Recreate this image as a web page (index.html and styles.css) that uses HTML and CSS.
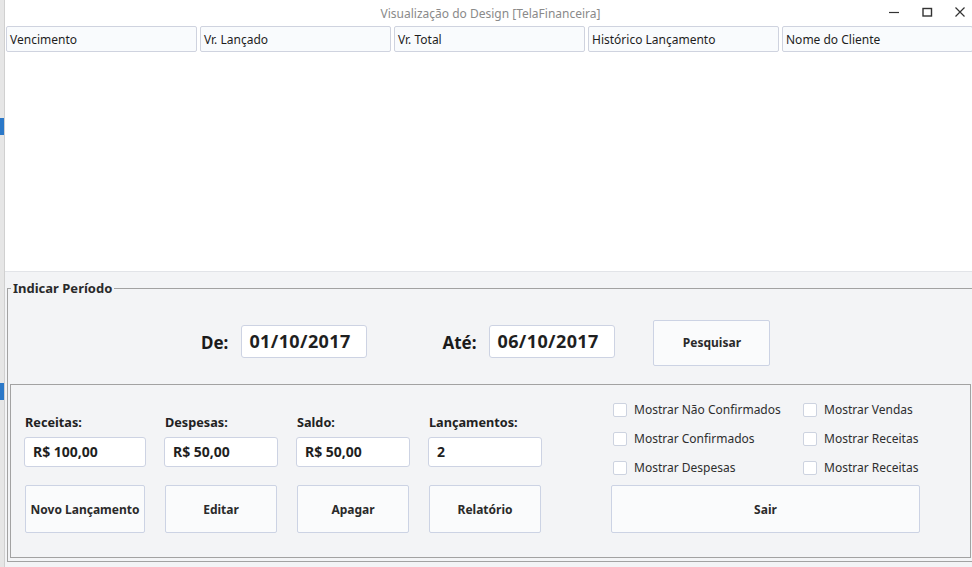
FILE: index.html
```html
<!DOCTYPE html>
<html lang="pt">
<head>
<meta charset="utf-8">
<title>TelaFinanceira</title>
<link rel="stylesheet" href="styles.css">
</head>
<body>
<div class="bg-app">
  <span class="bg-sel bg-sel-1"></span>
  <span class="bg-sel bg-sel-2"></span>
</div>
<div class="window">
  <div class="titlebar">
    <div class="title">Visualização do Design [TelaFinanceira]</div>
    <div class="controls">
      <svg class="ctl" width="12" height="12" viewBox="0 0 12 12"><path d="M1 6.5h10" stroke="#333" stroke-width="1.2" fill="none"/></svg>
      <svg class="ctl" width="12" height="12" viewBox="0 0 12 12"><rect x="2" y="2.5" width="8.5" height="7.5" stroke="#333" stroke-width="1.4" fill="none"/></svg>
      <svg class="ctl" width="12" height="12" viewBox="0 0 12 12"><path d="M1.5 1.5l9 9M10.5 1.5l-9 9" stroke="#333" stroke-width="1.2" fill="none"/></svg>
    </div>
  </div>
  <div class="table">
    <div class="thead">
      <div class="th">Vencimento</div>
      <div class="th">Vr. Lançado</div>
      <div class="th">Vr. Total</div>
      <div class="th">Histórico Lançamento</div>
      <div class="th">Nome do Cliente</div>
    </div>
    <div class="tbody"></div>
  </div>
  <div class="panel">
    <fieldset class="periodo">
      <legend>Indicar Período</legend>
      <div class="date-row">
        <span class="date-label">De:</span>
        <div class="date-input de">01/10/2017</div>
        <span class="date-label ate">Até:</span>
        <div class="date-input">06/10/2017</div>
        <button class="btn btn-pesquisar">Pesquisar</button>
      </div>
      <div class="inner">
        <div class="cols">
          <div class="col col-first">
            <div class="lbl">Receitas:</div>
            <div class="val">R$ 100,00</div>
            <button class="btn btn-col">Novo Lançamento</button>
          </div>
          <div class="col">
            <div class="lbl">Despesas:</div>
            <div class="val">R$ 50,00</div>
            <button class="btn btn-col">Editar</button>
          </div>
          <div class="col">
            <div class="lbl">Saldo:</div>
            <div class="val">R$ 50,00</div>
            <button class="btn btn-col">Apagar</button>
          </div>
          <div class="col">
            <div class="lbl">Lançamentos:</div>
            <div class="val">2</div>
            <button class="btn btn-col">Relatório</button>
          </div>
        </div>
        <div class="right">
          <div class="checks">
            <label class="chk"><span class="box"></span>Mostrar Não Confirmados</label>
            <label class="chk"><span class="box"></span>Mostrar Vendas</label>
            <label class="chk"><span class="box"></span>Mostrar Confirmados</label>
            <label class="chk"><span class="box"></span>Mostrar Receitas</label>
            <label class="chk"><span class="box"></span>Mostrar Despesas</label>
            <label class="chk"><span class="box"></span>Mostrar Receitas</label>
          </div>
          <button class="btn btn-sair">Sair</button>
        </div>
      </div>
    </fieldset>
  </div>
</div>
</body>
</html>
```
FILE: styles.css
```css
* { box-sizing: border-box; }
html, body {
  margin: 0;
  padding: 0;
  width: 972px;
  height: 567px;
  overflow: hidden;
}
body {
  display: flex;
  font-family: "Noto Sans", "Open Sans", sans-serif;
  font-size: 12px;
  color: #2a2a2a;
  background: #ececec;
}
.bg-app {
  width: 5px;
  flex: none;
  background: #e6e6e6;
  display: flex;
  flex-direction: column;
  border-right: 1px solid #d0d0d0;
}
.bg-sel { display: block; background: #2b78c8; height: 17px; }
.bg-sel-1 { margin-top: 118px; }
.bg-sel-2 { margin-top: 248px; }

.window {
  flex: 1;
  display: flex;
  flex-direction: column;
  background: #fff;
  min-width: 0;
}
.titlebar {
  height: 26px;
  flex: none;
  display: flex;
  align-items: center;
  position: relative;
}
.title {
  flex: 1;
  text-align: center;
  color: #8a8a8a;
  font-size: 12px;
  padding-left: 4px;
}
.controls {
  position: absolute;
  right: 6px;
  top: 6px;
  display: flex;
  gap: 21px;
}
.ctl { display: block; }

.table {
  height: 245px;
  flex: none;
  display: flex;
  flex-direction: column;
  padding-left: 1px;
}
.thead {
  display: flex;
  gap: 3px;
  height: 26px;
  flex: none;
}
.th {
  width: 191px;
  flex: none;
  border: 1px solid #cfd3df;
  border-radius: 2px;
  background: #f9fbfd;
  padding: 4px 0 0 3px;
  font-size: 12px;
  color: #1e1e1e;
  white-space: nowrap;
}
.tbody { flex: 1; background: #fff; }

.panel {
  flex: 1;
  background: #f3f4f6;
  border-top: 1px solid #e2e4e8;
  padding: 8px 0 0 2px;
}
.periodo {
  margin: 0;
  border: 1px solid #a2a2a2;
  border-right: none;
  padding: 0 0 3px 2px;
  min-width: 0;
}
.periodo legend {
  font-weight: bold;
  font-size: 13px;
  color: #2a2a2a;
  padding: 0 2px;
  margin-left: 1px;
  line-height: 16px;
}
.date-row {
  display: flex;
  align-items: center;
  height: 45px;
  margin-top: 24px;
  padding-left: 191px;
}
.date-label {
  font-weight: bold;
  font-size: 17px;
  color: #1a1a1a;
  margin-right: 13px;
}
.date-label.ate { margin-left: 75px; margin-right: 13px; }
.date-input {
  width: 126px;
  height: 33px;
  margin-top: -2px;
  background: #fff;
  border: 1px solid #cdd3e3;
  border-radius: 3px;
  font-weight: bold;
  font-size: 18px;
  line-height: 30px;
  padding-left: 7px;
  color: #1f1f1f;
  letter-spacing: 0.4px;
}
.btn {
  font-family: "Noto Sans", "Open Sans", sans-serif;
  font-weight: bold;
  font-size: 12px;
  color: #2a2a2a;
  background: #fafbfc;
  border: 1px solid #ccd3e4;
  border-radius: 2px;
  padding: 0;
  cursor: default;
}
.btn-pesquisar {
  width: 117px;
  height: 46px;
  margin-left: 38px;
}
.inner {
  margin-top: 19px;
  border: 1px solid #a2a2a2;
  height: 174px;
  width: 961px;
  display: flex;
  padding: 28px 0 0 13px;
}
.cols { display: flex; gap: 18px; }
.col {
  width: 114px;
  display: flex;
  flex-direction: column;
  align-items: flex-start;
}
.col-first { width: 122px; }
.lbl {
  font-weight: bold;
  font-size: 12.7px;
  line-height: 18px;
  padding-left: 1px;
  color: #222;
}
.val {
  margin-top: 6px;
  width: 100%;
  height: 30px;
  background: #fff;
  border: 1px solid #cdd3e3;
  border-radius: 3px;
  font-weight: bold;
  font-size: 14px;
  line-height: 27px;
  padding-left: 8px;
  color: #1f1f1f;
}
.btn-col {
  margin-top: 18px;
  margin-left: 1px;
  width: calc(100% - 2px);
  height: 48px;
  white-space: nowrap;
}
.right {
  margin-left: 69px;
  margin-top: -18px;
  display: flex;
  flex-direction: column;
}
.checks {
  display: grid;
  grid-template-columns: 190px 140px;
  grid-auto-rows: 29px;
}
.chk {
  display: flex;
  align-items: center;
  font-size: 12px;
  color: #2e2e2e;
  white-space: nowrap;
  padding-left: 2px;
}
.box {
  width: 14px;
  height: 14px;
  background: #fff;
  border: 1px solid #cdd3e0;
  border-radius: 2px;
  margin-right: 7px;
  flex: none;
}
.btn-sair {
  margin-top: 3px;
  width: 309px;
  height: 48px;
}
```
